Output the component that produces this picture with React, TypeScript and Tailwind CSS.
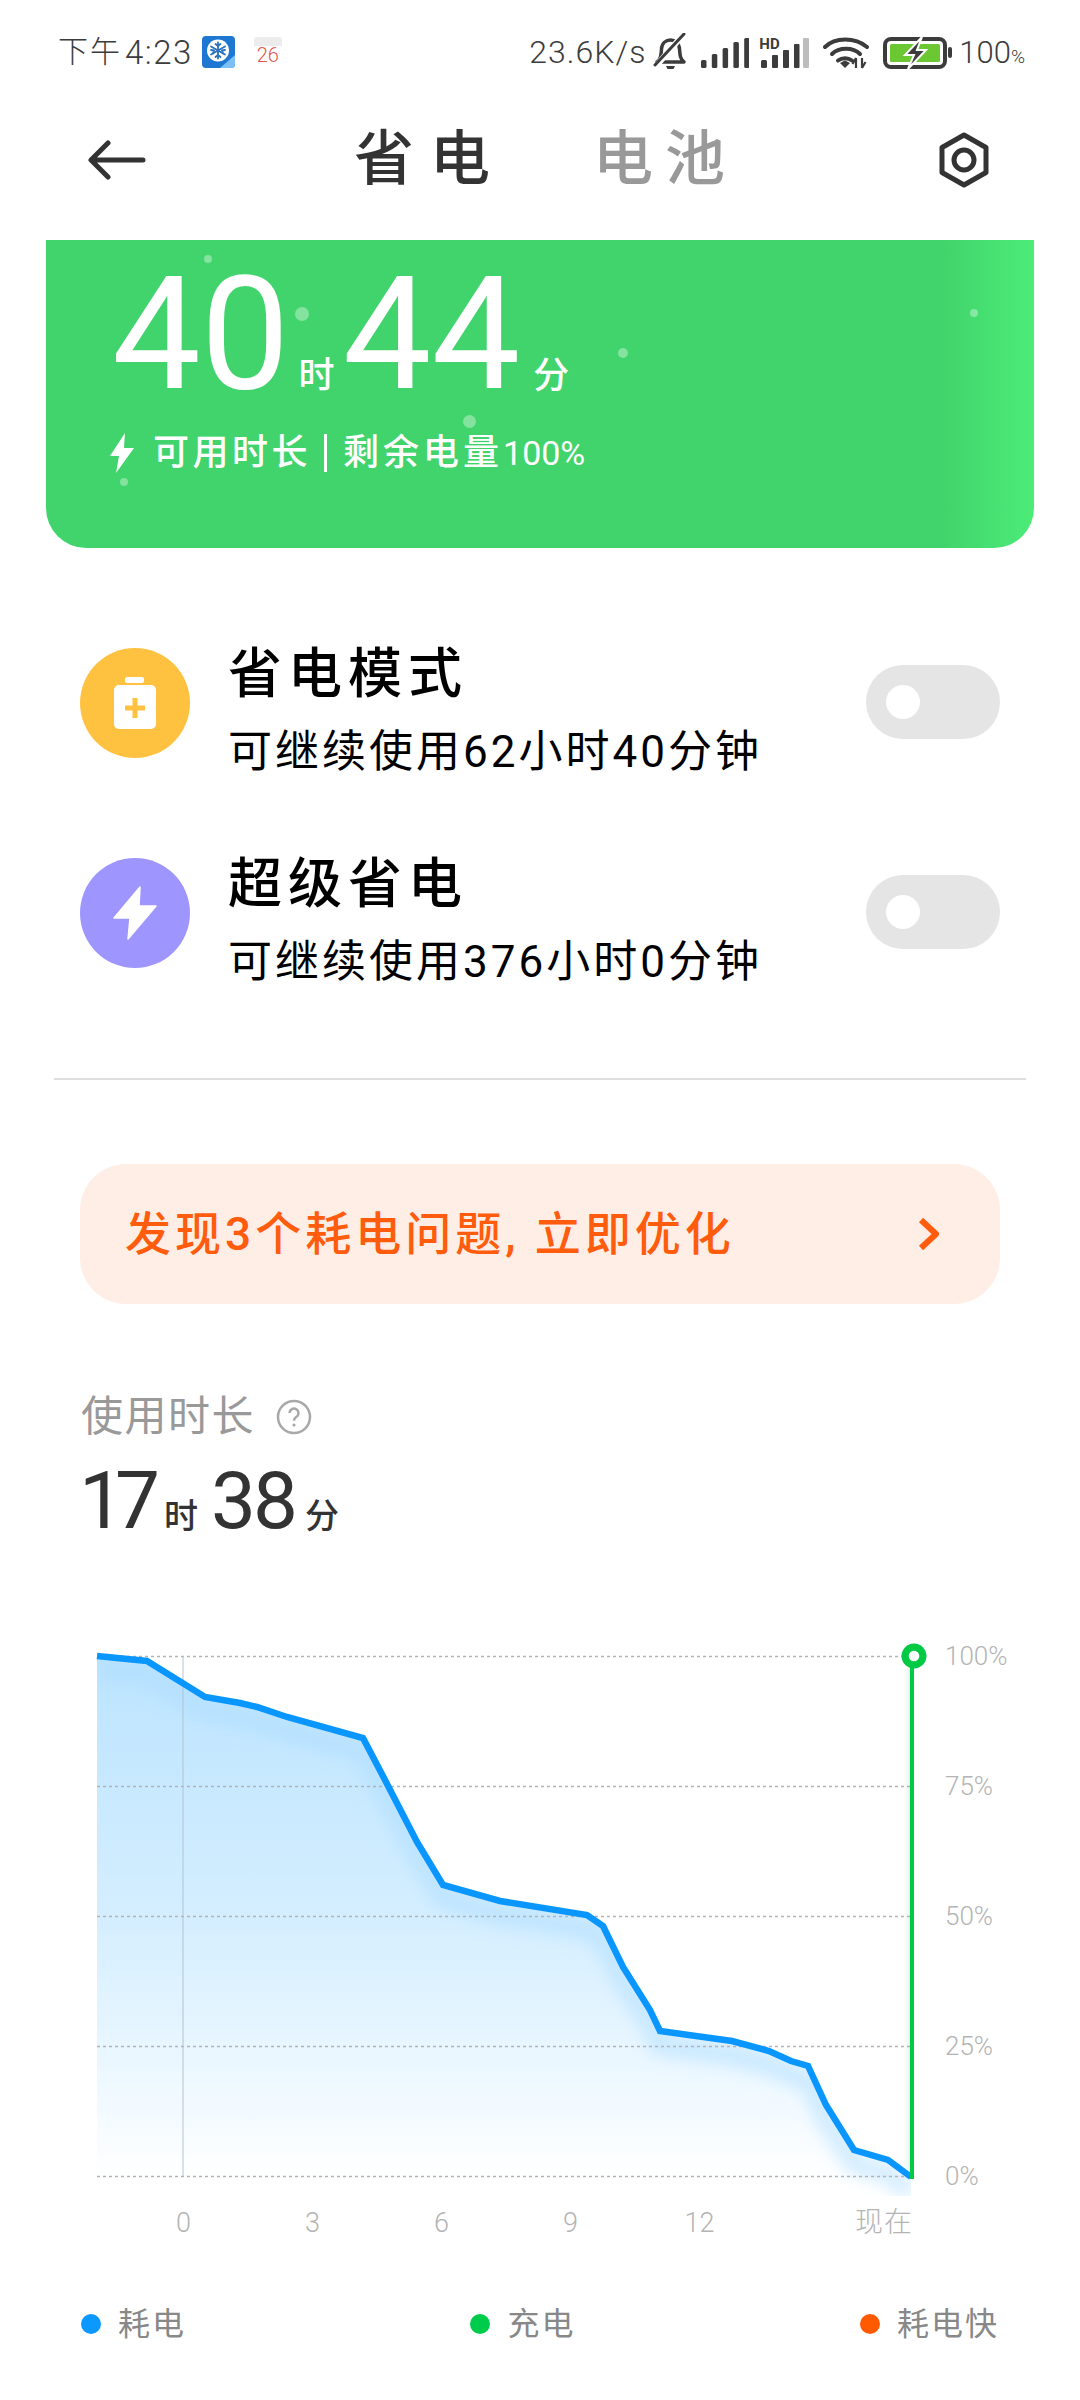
const areaPoints =
  "97,1656 147,1661 205,1697 240,1703 257,1707 287,1717 363,1738 385,1780 417,1842 443,1885 500,1901 587,1915 603,1926 623,1967 650,2010 660,2031 732,2041 769,2051 791,2061 808,2066 826,2105 854,2150 888,2160 911,2177";

function StatusLeft() {
  return (
    <div className="flex items-center">
      <span className="text-[30px] leading-none font-light text-[#3c3c3c] tracking-[2px]">下午</span>
      <span className="ml-[3px] text-[33px] leading-none font-light text-[#3c3c3c] tracking-[1.500px]">4:23</span>
      <svg width="33" height="32" viewBox="0 0 33 32" className="ml-[9px]">
        <rect width="33" height="32" rx="4" fill="#1e78d2" />
        <path d="M18 32 33 19v9a4 4 0 0 1-4 4z" fill="#7cc0f5" />
        <circle cx="16" cy="14.500" r="11" fill="#fff" />
        <g stroke="#2a72bd" strokeWidth="1.800" strokeLinecap="round">
          <path d="M16 6.500v16M9 10.500l14 8M23 10.500l-14 8" />
          <path d="M13.500 8l2.500 2 2.500-2M13.500 21l2.500-2 2.500 2M9 14l3 .500-1 3M23 14l-3 .500 1 3" fill="none" />
        </g>
      </svg>
      <div className="ml-[19px] w-[28px] h-[30px] rounded-[3px] overflow-hidden bg-white flex flex-col items-center">
        <div className="w-full h-[9px] bg-[#ececec] shrink-0" />
        <span className="text-[20px] leading-[19px] font-light text-[#e2574c]">26</span>
      </div>
    </div>
  );
}

function Bars() {
  const heights = [8, 14, 20, 26, 30];
  return (
    <svg width="48" height="30" viewBox="0 0 48 30">
      {heights.map((h, i) => (
        <rect key={i} x={i * 10.800} y={30 - h} width="5.500" height={h} rx="1.500" fill="#3c3c3c" />
      ))}
    </svg>
  );
}

function StatusRight() {
  return (
    <div className="flex items-center">
      <span className="text-[32px] leading-none font-light text-[#3c3c3c] tracking-[1px]">23.6K/s</span>
      <svg width="37" height="40" viewBox="0 0 35 40" className="ml-[6px] mt-[2px]">
        <path d="M4 29c4-3 4-7 4.500-13C9 10 13 7 17.500 7S26 10 26.500 16c.5 6 .5 10 4.500 13z" fill="none" stroke="#3c3c3c" strokeWidth="3.500" strokeLinejoin="round" />
        <path d="M13 33h9l-1.500 3h-6z" fill="#3c3c3c" />
        <path d="M3 33 30 2" stroke="#fff" strokeWidth="6" />
        <path d="M2 32 31 1" stroke="#3c3c3c" strokeWidth="3" strokeLinecap="round" />
      </svg>
      <div className="ml-[12px] mt-[2px]">
        <Bars />
      </div>
      <div className="relative ml-[10px] w-[50px] mt-[2px]">
        <span className="absolute left-0 top-0 text-[15px] leading-[13px] font-bold text-[#3c3c3c]">HD</span>
        <svg width="50" height="30" viewBox="0 0 50 30">
          <rect x="2" y="22" width="6" height="8" rx="1.500" fill="#3c3c3c" />
          <rect x="13" y="17" width="6" height="13" rx="1" fill="#3c3c3c" />
          <rect x="24" y="12" width="6" height="18" rx="1" fill="#3c3c3c" />
          <rect x="35" y="6" width="5.500" height="24" rx="1" fill="#3c3c3c" />
          <rect x="44" y="0" width="6" height="30" rx="1" fill="#bdbdbd" />
        </svg>
      </div>
      <svg width="46" height="34" viewBox="0 0 46 34" className="ml-[14px] mt-[2px]">
        <g fill="none" stroke="#3c3c3c" strokeWidth="4" strokeLinecap="round">
          <path d="M2 11C12 1 32 1 44 11" />
          <path d="M9 18c7-7 21-7 28 0" />
          <path d="M15 24.500c4-3 10-3 14 0" />
        </g>
        <path d="M17 27l5-2.500 5 2.500-5 5z" fill="#3c3c3c" />
        <path d="M33 22v10M29.500 28l3.500-6M39 22v10M42.500 26l-3.500 6" stroke="#3c3c3c" strokeWidth="2.200" fill="none" />
      </svg>
      <svg width="69" height="32" viewBox="0 0 69 32" className="ml-[14px] mt-[1px]">
        <rect x="2" y="2" width="60" height="28" rx="6" fill="none" stroke="#3c3c3c" strokeWidth="4" />
        <rect x="7" y="7" width="50" height="18" rx="1.500" fill="#6cc832" />
        <path d="M39 0 22 18h9l-6 14 18-19h-9z" fill="#3c3c3c" stroke="#fff" strokeWidth="2" />
        <rect x="65" y="10" width="4" height="11" rx="2" fill="#3c3c3c" />
      </svg>
      <span className="ml-[7px] text-[31px] leading-none font-light text-[#3c3c3c]">100</span>
      <span className="text-[19px] leading-none font-light text-[#3c3c3c] mt-[9px]">%</span>
    </div>
  );
}

function Header() {
  return (
    <div className="h-[136px] flex items-center pl-[88px] pr-[90px] pb-[24px]">
      <svg width="58" height="40" viewBox="0 0 58 40">
        <path d="M55 20H4M20 3 3 20l17 17" fill="none" stroke="#333" strokeWidth="5" strokeLinecap="round" strokeLinejoin="round" />
      </svg>
      <div className="ml-[208px] text-[60px] leading-none tracking-[16px] text-[#333] font-medium">省电</div>
      <div className="ml-[87px] text-[60px] leading-none tracking-[12px] text-[#999] font-medium">电池</div>
      <svg width="52" height="56" viewBox="0 0 52 56" className="ml-auto">
        <path d="M26 3 48 15.500v25L26 53 4 40.500v-25z" fill="none" stroke="#333" strokeWidth="5" strokeLinejoin="round" />
        <circle cx="26" cy="28" r="10" fill="none" stroke="#333" strokeWidth="5" />
      </svg>
    </div>
  );
}

function Sparkle({ className }: { className: string }) {
  return <div className={`absolute rounded-full bg-white/35 ${className}`} />;
}

function GreenCard() {
  return (
    <div className="relative mx-[46px] h-[308px] rounded-b-[40px] bg-[linear-gradient(90deg,#41d46c_91%,#4cec78_100%)] pl-[62px] pt-[15px] text-white">
      <Sparkle className="left-[158px] top-[15px] w-[8px] h-[8px]" />
      <Sparkle className="left-[249px] top-[67px] w-[14px] h-[14px]" />
      <Sparkle className="left-[572px] top-[108px] w-[10px] h-[10px]" />
      <Sparkle className="left-[924px] top-[69px] w-[8px] h-[8px]" />
      <Sparkle className="left-[417px] top-[175px] w-[13px] h-[13px]" />
      <Sparkle className="left-[74px] top-[238px] w-[8px] h-[8px]" />
      <div className="flex items-baseline h-[158px] pl-[4px]">
        <span className="text-[158px] leading-none">40</span>
        <span className="ml-[9px] text-[36px] leading-none font-medium">时</span>
        <span className="ml-[8px] text-[158px] leading-none">44</span>
        <span className="ml-[13px] text-[36px] leading-none font-medium">分</span>
      </div>
      <div className="flex items-center mt-[20px] ml-[1px] font-medium">
        <svg width="26" height="40" viewBox="0 0 26 40">
          <path d="M16 0 1 23h9L7 40l18-25h-10z" fill="#fff" />
        </svg>
        <span className="ml-[18px] text-[36px] leading-none tracking-[3.500px]">可用时长</span>
        <span className="ml-[13px] w-[3px] h-[38px] bg-white" />
        <span className="ml-[16px] text-[36px] leading-none tracking-[4px]">剩余电量</span>
        <span className="text-[34px] leading-none font-normal">100%</span>
      </div>
    </div>
  );
}

function ModeRow({ icon, color, title, desc }: { icon: React.ReactNode; color: string; title: string; desc: string }) {
  return (
    <div className="flex items-center h-[210px] pl-[80px] pr-[80px]">
      <div className={`w-[110px] h-[110px] rounded-full flex items-center justify-center ${color}`}>{icon}</div>
      <div className="ml-[38px] pt-[16px]">
        <div className="text-[54px] leading-[60px] tracking-[6px] text-black font-medium">{title}</div>
        <div className="mt-[22px] text-[44px] leading-[50px] tracking-[3px] text-black">{desc}</div>
      </div>
      <div className="ml-auto -mt-[2px] w-[134px] h-[74px] rounded-full bg-[#e5e5e5] flex items-center pl-[20px]">
        <div className="w-[34px] h-[34px] rounded-full bg-white" />
      </div>
    </div>
  );
}

function Chart() {
  return (
    <div>
      <div className="flex pl-[90px]">
        <svg width="840" height="560" viewBox="90 1640 840 560" className="shrink-0">
          <defs>
            <linearGradient id="area" x1="0" y1="1656" x2="0" y2="2178" gradientUnits="userSpaceOnUse">
              <stop offset="0" stopColor="#bce4ff" />
              <stop offset="0.5" stopColor="#d4eeff" />
              <stop offset="0.75" stopColor="#e8f6ff" />
              <stop offset="1" stopColor="#ffffff" />
            </linearGradient>
            <linearGradient id="glow" x1="0" x2="1" y1="0" y2="0">
              <stop offset="0" stopColor="#00c944" stopOpacity="0" />
              <stop offset="1" stopColor="#00c944" stopOpacity="0.1" />
            </linearGradient>
            <filter id="soft" x="-10%" y="-10%" width="120%" height="120%">
              <feGaussianBlur stdDeviation="8" />
            </filter>
            <clipPath id="under">
              <polygon points={`${areaPoints} 911,2196 97,2196`} />
            </clipPath>
          </defs>
          <polygon points={`${areaPoints} 911,2178 97,2178`} fill="url(#area)" />
          <g clipPath="url(#under)">
            <polyline
              points={areaPoints}
              transform="translate(0 14)"
              fill="none"
              stroke="#a9dcff"
              strokeOpacity="0.5"
              strokeWidth="20"
              filter="url(#soft)"
            />
          </g>
          <g stroke="#aeb4b8" strokeWidth="1.500" strokeDasharray="3 3">
            <path d="M97 1656.500H905M97 1786.500H910M97 1916.500H910M97 2046.500H910M97 2176.500H910" />
          </g>
          <path d="M183 1656V2176" stroke="#b0c0cc" strokeOpacity="0.8" strokeWidth="1.200" />
          <rect x="903" y="1668" width="7" height="510" fill="url(#glow)" />
          <polyline points={areaPoints} fill="none" stroke="#0a96ff" strokeWidth="6.500" strokeLinejoin="miter" />
          <path d="M912 1665V2179" stroke="#00c944" strokeWidth="4" />
          <circle cx="914" cy="1656" r="8.900" fill="#fff" stroke="#00c944" strokeWidth="7.200" />
        </svg>
        <div className="ml-[15px] flex flex-col gap-[98px] text-[26px] leading-[32px] font-light text-[#b4b4b4]">
          <span>100%</span>
          <span>75%</span>
          <span>50%</span>
          <span>25%</span>
          <span>0%</span>
        </div>
      </div>
      <div className="flex items-center mt-[3px] pl-[119px] h-[40px] text-[27px] leading-none font-light text-[#b4b4b4]">
        <span className="w-[129px] text-center">0</span>
        <span className="w-[129px] text-center">3</span>
        <span className="w-[129px] text-center">6</span>
        <span className="w-[129px] text-center">9</span>
        <span className="w-[129px] text-center">12</span>
        <span className="ml-[91px] text-[28px] tracking-[1px]">现在</span>
      </div>
    </div>
  );
}

function Legend({ color, label }: { color: string; label: string }) {
  return (
    <div className="flex items-center">
      <span className={`w-[20px] h-[20px] rounded-full ${color}`} />
      <span className="ml-[17px] text-[32px] leading-none tracking-[2px] text-[#888]">{label}</span>
    </div>
  );
}

export default function App() {
  return (
    <div className="w-[1080px] h-[2400px] overflow-hidden bg-white font-[Roboto,'Noto_Sans_CJK_SC',sans-serif]">
      <div className="h-[104px] flex items-center justify-between pl-[58px] pr-[55px]">
        <StatusLeft />
        <StatusRight />
      </div>
      <Header />
      <GreenCard />

      <div className="mt-[50px]">
        <ModeRow
          color="bg-[#ffc240]"
          title="省电模式"
          desc="可继续使用62小时40分钟"
          icon={
            <svg width="44" height="52" viewBox="0 0 44 52">
              <rect x="12" y="0" width="19" height="6" rx="2" fill="#fff" />
              <rect x="1" y="8" width="42" height="44" rx="5" fill="#fff" />
              <path d="M22 21v20M12 31h20" stroke="#ffc240" strokeWidth="5" />
            </svg>
          }
        />
        <ModeRow
          color="bg-[#9f95ff]"
          title="超级省电"
          desc="可继续使用376小时0分钟"
          icon={
            <svg width="44" height="54" viewBox="0 0 44 54">
              <path d="M27 1 1 32h16l-2 21 28-33H26z" fill="#fff" stroke="#fff" strokeLinejoin="round" strokeWidth="1.500" />
            </svg>
          }
        />
      </div>

      <div className="mx-[54px] mt-[60px] h-[2px] bg-[#dedede]" />

      <div className="mx-[80px] mt-[84px] h-[140px] rounded-[46px] bg-[#ffeee6] flex items-center pl-[45px] pr-[60px] text-[#ff5c0e]">
        <span className="text-[46px] leading-none tracking-[4px] font-medium">发现3个耗电问题, 立即优化</span>
        <svg width="22" height="34" viewBox="0 0 22 34" className="ml-auto">
          <path d="M3 3l15 14L3 31" fill="none" stroke="#ff5c0e" strokeWidth="6" strokeLinejoin="round" />
        </svg>
      </div>

      <div className="pl-[81px] mt-[89px]">
        <div className="flex items-center h-[48px]">
          <span className="text-[42px] leading-none tracking-[1.500px] text-[#999]">使用时长</span>
          <svg width="36" height="36" viewBox="0 0 36 36" className="ml-[21px]">
            <circle cx="18" cy="18" r="16" fill="none" stroke="#a8a8a8" strokeWidth="2.500" />
            <path d="M13.500 14a4.500 4.500 0 1 1 7 3.800c-1.700 1.100-2.500 2-2.500 4" fill="none" stroke="#a8a8a8" strokeWidth="2.500" />
            <circle cx="18" cy="26" r="1.600" fill="#a8a8a8" />
          </svg>
        </div>
        <div className="flex items-baseline mt-[20px] h-[80px] text-[#333]">
          <span className="-ml-[2px] w-[85px] text-[80px] leading-none tracking-[-9px]">17</span>
          <span className="text-[34px] leading-none font-medium">时</span>
          <span className="ml-[13px] text-[80px] leading-none tracking-[-3px]">38</span>
          <span className="ml-[10px] text-[34px] leading-none font-medium">分</span>
        </div>
      </div>

      <div className="mt-[99px]">
        <Chart />
      </div>

      <div className="flex justify-between px-[81px] mt-[65px]">
        <Legend color="bg-[#0c99ff]" label="耗电" />
        <Legend color="bg-[#00cc4c]" label="充电" />
        <Legend color="bg-[#ff5a00]" label="耗电快" />
      </div>
    </div>
  );
}
